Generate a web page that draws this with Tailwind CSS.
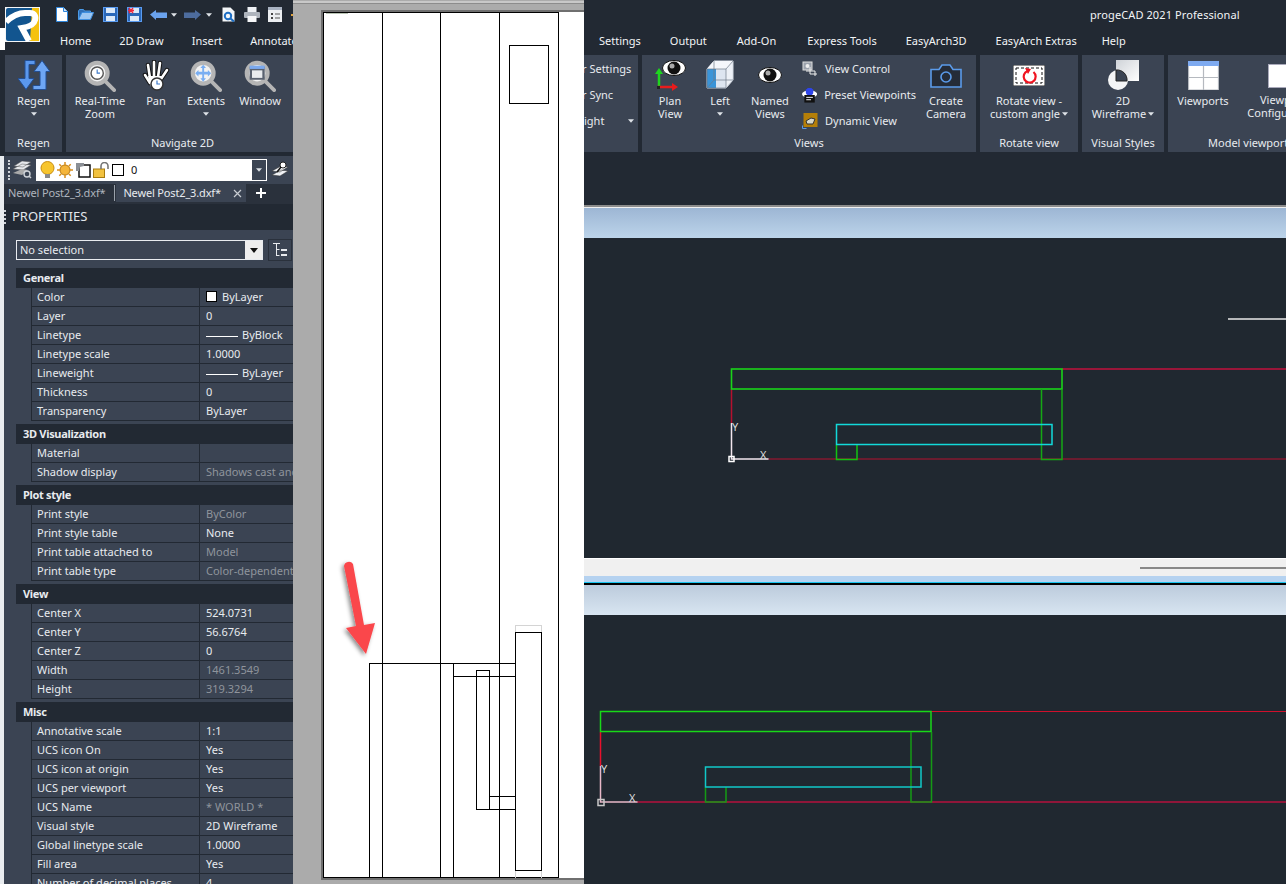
<!DOCTYPE html>
<html lang="en">

<head>
    <meta charset="UTF-8">
    <title>progeCAD 2021 Professional</title>
    <script src="https://cdn.jsdelivr.net/npm/@tailwindcss/browser@4"></script>
</head>

<body class="bg-[#222933] font-['Noto_Sans',sans-serif] text-[11px] text-[#e8ebef] w-[1286px] h-[884px] overflow-hidden">
    <!-- shared icons -->
    <svg class="hidden">
        <symbol id="caret" viewBox="0 0 7 4"><path d="M0 0h7L3.500 4z" fill="#dfe3e8" /></symbol>
        <symbol id="eye" viewBox="0 0 24 16">
            <ellipse cx="12" cy="8" rx="11.500" ry="7.500" fill="#fff" stroke="#111" />
            <circle cx="12" cy="8" r="6.500" fill="#111" />
            <circle cx="10" cy="6" r="2.500" fill="#aaa" />
        </symbol>
        <symbol id="lens" viewBox="0 0 34 34">
            <path d="M22 22l10 10" stroke="#b5b5b5" stroke-width="4" stroke-linecap="round" />
            <circle cx="14" cy="14" r="11" fill="#f2f2f2" stroke="#b5b5b5" stroke-width="4.500" />
        </symbol>
    </svg>

    <div class="flex h-[884px]">
        <!-- left: ribbon and properties -->
        <div class="relative w-[293px] shrink-0 overflow-hidden flex flex-col">
            <div class="absolute left-0 top-[28px] w-[5px] h-[22px] bg-white"></div>
            <div class="flex h-[55px] shrink-0">
                <svg class="ml-[5px] mt-[7px] w-[35px] h-[35px] shrink-0" viewBox="0 0 35 35">
                    <rect width="35" height="35" fill="#f4f6f8" />
                    <rect x="1" y="1" width="33" height="33" rx="2" fill="#12558f" />
                    <path d="M27 1h7v33h-9z" fill="#f5c20e" />
                    <path d="M1 15C8 8 14 6 20 6h5c5 0 6 4 5 7-1 5-6 7-13 8l7 13" fill="none" stroke="#fff" stroke-width="6" />
                </svg>
                <div class="flex flex-col">
                    <div class="h-[28px] flex items-start pt-[7px]">
                        <svg class="ml-[16px] w-[12px] h-[15px]" viewBox="0 0 12 15"><path d="M.5.500h7l4 4v10H.500z" fill="#fff" stroke="#2f86dc" /><path d="M7.500.500v4h4" fill="#cfe3f7" stroke="#2f86dc" /></svg>
                        <svg class="ml-[10px] mt-[2px] w-[16px] h-[11px]" viewBox="0 0 16 11"><path d="M.5 10.500V2l1-1.500h4l1 1.500h6v1" fill="#2f6fb8" stroke="#4a9be8" /><path d="M.5 10.500L4 3.500h11.500l-3 7z" fill="#9cc6f2" stroke="#3f8fe0" /></svg>
                        <svg class="ml-[9px] w-[15px] h-[15px]" viewBox="0 0 15 15"><rect x=".5" y=".5" width="14" height="14" fill="#2a67b8" stroke="#5a9bf0" /><rect x="3" y="1" width="9" height="5" fill="#dbe8f7" /><rect x="3" y="9" width="9" height="5" fill="#dbe8f7" /></svg>
                        <svg class="ml-[9px] w-[15px] h-[15px]" viewBox="0 0 15 15"><rect x=".5" y=".5" width="14" height="14" fill="#2a67b8" stroke="#5a9bf0" /><rect x="3" y="1" width="9" height="5" fill="#dbe8f7" /><rect x="3" y="9" width="9" height="5" fill="#dbe8f7" /><path d="M1 3.500h6M2 .8l4 5.400M6 .8L2 6.200" stroke="#f0263a" stroke-width="1.400" /></svg>
                        <svg class="ml-[8px] mt-[3px] w-[17px] h-[10px]" viewBox="0 0 17 10"><path d="M0 4.500L6 0v2.500h11v5.500H6V10z" fill="#6aa2ee" /></svg>
                        <svg class="ml-[4px] mt-[6px] w-[6px] h-[4px]"><use href="#caret" /></svg>
                        <svg class="ml-[7px] mt-[3px] w-[17px] h-[10px]" viewBox="0 0 17 10"><path d="M17 4.500L11 0v2.500H0v5.500h11V10z" fill="#4d6c9e" /></svg>
                        <svg class="ml-[5px] mt-[6px] w-[6px] h-[4px]"><use href="#caret" /></svg>
                        <svg class="ml-[10px] w-[14px] h-[15px]" viewBox="0 0 14 15"><path d="M.5.500h8l4 4v10H.500z" fill="#f4f6f8" /><circle cx="6" cy="9" r="3.200" fill="none" stroke="#1f6fc4" stroke-width="2" /><path d="M8.500 11.500l3.500 3" stroke="#1f6fc4" stroke-width="2.200" /></svg>
                        <svg class="ml-[8px] w-[16px] h-[15px]" viewBox="0 0 16 15"><rect x="3.500" y="0" width="9" height="5" fill="#eef1f5" /><rect x="0" y="5" width="16" height="6" rx="1" fill="#aeb4bd" /><rect x="3.500" y="9" width="9" height="6" fill="#f6f7f9" /></svg>
                        <svg class="ml-[8px] w-[14px] h-[15px]" viewBox="0 0 14 15"><rect width="14" height="15" fill="#eceef1" /><rect width="14" height="3" fill="#a9b3c2" /><path d="M3 6h2v2H3zM3 10h2v2H3z" fill="#444" /><path d="M7 7h5M7 11h5" stroke="#555" /></svg>
                        <span class="ml-[9px] mt-[7px] w-[2px] h-[2px] bg-[#e0a33c]"></span>
                    </div>
                    <div class="h-[27px] flex items-start gap-[28px] pl-[20px] text-[#f2f4f6] whitespace-nowrap leading-[26px]">
                        <span>Home</span><span>2D Draw</span><span>Insert</span><span>Annotate</span>
                    </div>
                </div>
            </div>

            <div class="flex gap-[4px] pl-[5px] h-[97px] shrink-0">
                <div class="w-[57px] bg-[#3b4453] flex flex-col">
                    <div class="flex-1 flex flex-col items-center pt-[5px] leading-[13px] text-center">
                        <svg class="w-[32px] h-[30px] mb-[4px]" viewBox="0 0 32 30">
                            <path d="M7 .5h10v4h-6v14h5l-8 11-8-11h7z" fill="#5b98ee" stroke="#234f94" />
                            <path d="M24 .5l8 11h-4v18H15v-4h7v-14h-6z" fill="#6ea6f4" stroke="#234f94" />
                        </svg>
                        <span>Regen</span>
                        <svg class="w-[6px] h-[4px] mt-[5px]"><use href="#caret" /></svg>
                    </div>
                    <div class="h-[18px] text-center leading-[18px]">Regen</div>
                </div>
                <div class="flex-1 bg-[#3b4453] flex flex-col">
                    <div class="flex-1 flex pl-[4px] pt-[5px] leading-[13px] text-center">
                        <div class="w-[60px] flex flex-col items-center">
                            <svg class="w-[32px] h-[32px] mb-[2px]" viewBox="0 0 34 34">
                                <use href="#lens" />
                                <circle cx="14" cy="14" r="6.500" fill="#fff" stroke="#555" stroke-width="1.500" />
                                <path d="M14 10v4h3" fill="none" stroke="#3c78c8" stroke-width="1.200" />
                            </svg>
                            <span>Real-Time<br>Zoom</span>
                        </div>
                        <div class="w-[52px] flex flex-col items-center">
                            <svg class="w-[30px] h-[32px] mb-[2px]" viewBox="0 0 30 32">
                                <path d="M4 15l5 8M9 18L7 5M13 17V2M17 17l2-14M20 19l6-9" stroke="#111" stroke-width="4.500" stroke-linecap="round" />
                                <path d="M4 15l5 8M9 18L7 5M13 17V2M17 17l2-14M20 19l6-9" stroke="#fff" stroke-width="2.600" stroke-linecap="round" />
                                <path d="M7 16h14l-2 11H10z" fill="#fff" />
                                <circle cx="16" cy="24" r="6" fill="#fff" stroke="#333" stroke-width="1.500" />
                                <path d="M16 20.500V24h3" fill="none" stroke="#3c78c8" stroke-width="1.200" />
                            </svg>
                            <span>Pan</span>
                        </div>
                        <div class="w-[48px] flex flex-col items-center">
                            <svg class="w-[32px] h-[32px] mb-[2px]" viewBox="0 0 34 34">
                                <use href="#lens" />
                                <path d="M14 5l3 3.500h-2v4h4v-2l3.500 3.500-3.500 3.500v-2h-4v4h2L14 23l-3-3.500h2v-4H9v2L5.500 14 9 10.500v2h4v-4h-2z" fill="#79aef2" />
                            </svg>
                            <span>Extents</span>
                            <svg class="w-[6px] h-[4px] mt-[5px]"><use href="#caret" /></svg>
                        </div>
                        <div class="w-[60px] flex flex-col items-center">
                            <svg class="w-[32px] h-[32px] mb-[2px]" viewBox="0 0 34 34">
                                <use href="#lens" />
                                <rect x="6" y="7" width="16" height="14" fill="#5a6270" />
                                <rect x="8.500" y="11" width="11" height="8" fill="#e9ebee" />
                                <rect x="6" y="6" width="16" height="3.500" fill="#7ba9ee" />
                            </svg>
                            <span>Window</span>
                        </div>
                    </div>
                    <div class="h-[18px] text-center leading-[18px] pl-[6px]">Navigate 2D</div>
                </div>
            </div>

            <div class="h-[4px] shrink-0"></div>

            <div class="flex-1 border-l-[4px] border-[#e9ecef] flex flex-col min-h-0">
                <div class="h-[28px] shrink-0 bg-[#3b4453] pl-[1px] flex items-center">
                    <span class="ml-[3px] w-[2px] h-[20px] border-l-2 border-dotted border-[#cfd3d8]"></span>
                    <svg class="ml-[3px] w-[19px] h-[18px]" viewBox="0 0 19 18"><path d="M0 8l9-5 9 1-8 5zM1 5l8-5 9 1-8 5z" fill="#e6e8ec" stroke="#555" stroke-width=".5" /><path d="M0 12l9-4 6 1-6 5z" fill="#aaa" /><circle cx="14" cy="13" r="3" fill="none" stroke="#cfd3d8" stroke-width="1.400" /><path d="M16 15l2 2" stroke="#cfd3d8" stroke-width="1.500" /></svg>
                    <div class="ml-[4px] w-[231px] h-[22px] bg-white flex items-center relative">
                        <svg class="ml-[4px] w-[15px] h-[18px]" viewBox="0 0 15 18"><circle cx="7.500" cy="7" r="6.500" fill="#f7c52e" stroke="#c98d10" /><rect x="5" y="13" width="5" height="4" fill="#8a8a8a" /></svg>
                        <svg class="ml-[2px] w-[16px] h-[16px]" viewBox="0 0 16 16"><circle cx="8" cy="8" r="5" fill="#f5b53a" stroke="#b97a10" /><path d="M8 0v3M8 13v3M0 8h3M13 8h3M2.300 2.300l2 2M11.700 11.700l2 2M2.300 13.700l2-2M11.700 4.300l2-2" stroke="#d98f1c" stroke-width="1.500" /></svg>
                        <svg class="ml-[2px] w-[16px] h-[16px]" viewBox="0 0 16 16"><rect x="4" y="3" width="11" height="12" fill="#fff" stroke="#111" stroke-width="1.500" /><path d="M1 1h8v3l-4 1-1 4H1z" fill="#8b8f95" /></svg>
                        <svg class="ml-[2px] w-[17px] h-[16px]" viewBox="0 0 17 16"><rect x="0.500" y="7" width="11" height="8.500" fill="#f2c240" stroke="#a87c10" /><path d="M8 7V4a3.500 3.500 0 0 1 7 0v3" fill="none" stroke="#777" stroke-width="1.600" /></svg>
                        <span class="ml-[2px] w-[12px] h-[12px] bg-white border border-black"></span>
                        <span class="ml-[7px] text-[#111]">0</span>
                        <span class="absolute right-0 top-0 w-[16px] h-[22px] bg-[#3b4453] border border-white flex items-center justify-center">
                            <svg class="w-[6px] h-[4px]"><use href="#caret" /></svg>
                        </span>
                    </div>
                    <svg class="ml-[5px] w-[17px] h-[18px]" viewBox="0 0 17 18"><path d="M0 10l9-5 7 1-8 5zM0 14l9-5 7 1-8 5z" fill="#f0f2f5" stroke="#333" stroke-width=".5" /><circle cx="11" cy="4" r="3" fill="#fff" stroke="#222" /><path d="M9 6l-4 5" stroke="#111" stroke-width="1.500" /></svg>
                </div>
                <div class="h-[20px] shrink-0 bg-[#2a313c] flex items-start whitespace-nowrap tracking-[-0.16px]">
                    <span class="ml-[4px] leading-[18px] text-[#aeb4bd]">Newel Post2_3.dxf*</span>
                    <span class="ml-[9px] mt-[1px] w-px h-[16px] bg-[#9aa1ab]"></span>
                    <div class="ml-[1px] w-[130px] h-[18px] bg-[#3b4453] flex items-center pl-[7px]">
                        <span>Newel Post2_3.dxf*</span>
                        <svg class="ml-[12px] w-[9px] h-[9px]" viewBox="0 0 9 9"><path d="M1 1l7 7M8 1L1 8" stroke="#c8ccd2" stroke-width="1.200" /></svg>
                    </div>
                    <svg class="ml-[10px] mt-[4px] w-[10px] h-[10px]" viewBox="0 0 10 10"><path d="M5 0v10M0 5h10" stroke="#fff" stroke-width="2" /></svg>
                </div>
                <div class="h-[26px] shrink-0 bg-[#222933] flex items-center pb-[1px] text-[13px] text-[#e3e7ec]">
                    <span class="w-[2px] h-[14px] border-l-2 border-dotted border-[#cfd3d8]"></span>
                    <span class="ml-[6px]">PROPERTIES</span>
                </div>
                <div class="flex-1 bg-[#3b4453] pl-[12px] pt-[10px] min-h-0">
                    <div class="flex items-center h-[20px]">
                        <div class="w-[247px] h-[20px] border border-[#e8ebef] flex items-center pl-[3px] justify-between shrink-0">
                            <span>No selection</span>
                            <span class="w-[17px] h-[18px] bg-[#eeeeee] flex items-center justify-center">
                                <svg class="w-[8px] h-[5px]" viewBox="0 0 8 5"><path d="M0 0h8L4 5z" fill="#111" /></svg>
                            </span>
                        </div>
                        <span class="ml-[5px] w-[24px] h-[22px] border border-[#2a313c] flex items-center justify-center shrink-0">
                            <svg class="w-[14px] h-[14px]" viewBox="0 0 14 14"><path d="M0 .5h7M3.500 1v12M3.500 6.500h3M3.500 12.500h3" stroke="#e8ebef" /><path d="M8 6h6v2H8zM8 11h6v2H8z" fill="#e8ebef" /></svg>
                        </span>
                    </div>
                    <div id="props" class="mt-[8px]"></div>
                </div>
            </div>
        </div>

        <!-- middle: the sheet -->
        <svg class="w-[291px] h-[884px] shrink-0" viewBox="293 0 291 884" shape-rendering="crispEdges">
            <defs>
                <filter id="shadow" x="-40%" y="-20%" width="180%" height="140%">
                    <feDropShadow dx="-2" dy="2" stdDeviation="2" flood-color="#000" flood-opacity="0.45" />
                </filter>
            </defs>
            <rect x="293" y="0" width="291" height="884" fill="#ababab" />
            <rect x="293" y="1" width="291" height="2" fill="#c8c8c8" />
            <rect x="293" y="3" width="291" height="1" fill="#8c8c8c" />
            <rect x="321" y="10" width="263" height="870" fill="#6f6f6f" />
            <rect x="323" y="12" width="261" height="866" fill="#fff" />
            <path d="M326 13.500h22" stroke="#b9c4b4" />
            <g fill="none" stroke="#000">
                <path d="M323.500 878V12.500H558.500V878M323.500 877.500H558.500" />
                <path d="M382.500 12v866M440.500 12v866M499.500 12v866" />
                <rect x="509.500" y="45.500" width="39" height="58" />
                <path d="M369.500 878V663.500H515.500M453.500 663v215M453.500 676.500h62" />
                <rect x="476.500" y="670.500" width="13" height="139" />
                <path d="M489 796.500h26M489 809.500h26" />
                <path d="M515.500 632.500v-7h26v7M515.500 870.500v7M541.500 870.500v7" stroke="#d4d4d4" />
                <rect x="515.500" y="632.500" width="26" height="238" />
            </g>
            <g filter="url(#shadow)" shape-rendering="auto" fill="#fa474c">
                <path d="M344 566a5 5 0 0 1 9-2l11 61 11-2-9 31-20-26 10-2z" />
            </g>
        </svg>

        <!-- right: ribbon and the two viewports -->
        <div class="flex-1 min-w-0 overflow-hidden flex flex-col">
            <div class="h-[29px] shrink-0 pl-[506px] pt-[6px] tracking-[0.1px] leading-[18px] text-[#f2f4f6] whitespace-nowrap">progeCAD 2021 Professional</div>
            <div class="h-[26px] shrink-0 flex gap-[29px] pl-[15px] text-[#f2f4f6] whitespace-nowrap leading-[24px]">
                <span>Settings</span><span>Output</span><span class="ml-[1px]">Add-On</span><span class="ml-[2px]">Express Tools</span><span>EasyArch3D</span><span>EasyArch Extras</span><span class="-ml-[4px]">Help</span>
            </div>
            <div class="h-[97px] shrink-0 flex gap-[4px] whitespace-nowrap">
                <div class="w-[54px] shrink-0 bg-[#3b4453] overflow-hidden leading-[26px] pt-[1px] relative">
                    <div class="-ml-[2px]">r Settings</div>
                    <div class="-ml-[2px]">r Sync</div>
                    <div class="flex items-center">ight<svg class="ml-[24px] w-[6px] h-[4px]"><use href="#caret" /></svg></div>
                </div>
                <div class="w-[334px] shrink-0 bg-[#3b4453] flex flex-col">
                    <div class="flex-1 flex leading-[13px] text-center pt-[5px]">
                        <div class="w-[56px] flex flex-col items-center">
                            <svg class="w-[32px] h-[34px]" viewBox="0 0 32 34">
                                <use href="#eye" x="8" y="0" width="24" height="16" />
                                <path d="M5 27V12" stroke="#1ed51e" stroke-width="2.500" /><path d="M5 8l4 6H1z" fill="#1ed51e" />
                                <path d="M4 27h15" stroke="#e81c1c" stroke-width="2.500" /><path d="M24 27l-6-4v8z" fill="#e81c1c" />
                                <rect x="3" y="26" width="3" height="3" fill="#222" />
                            </svg>
                            <span>Plan<br>View</span>
                        </div>
                        <div class="w-[44px] flex flex-col items-center">
                            <svg class="w-[28px] h-[34px]" viewBox="0 0 28 34">
                                <path d="M1 9l7-8h19v19l-7 8H1z" fill="#edf1f7" stroke="#d5dbe4" />
                                <path d="M1 9l7-8h19l-7 8z" fill="#f5f7fb" />
                                <path d="M1 9h9v19H1z" fill="#3a94d8" />
                                <path d="M10 9h10v19H10z" fill="#dde5f0" />
                                <path d="M1 9h19v19H1zM20 9l7-8M8 1v19h19M8 20l-7 8" fill="none" stroke="#6f7a88" stroke-width=".7" />
                            </svg>
                            <span>Left</span>
                            <svg class="w-[6px] h-[4px] mt-[5px]"><use href="#caret" /></svg>
                        </div>
                        <div class="w-[56px] flex flex-col items-center">
                            <svg class="mt-[7px] mb-[11px] w-[24px] h-[16px] shrink-0"><use href="#eye" /></svg>
                            <span>Named<br>Views</span>
                        </div>
                        <div class="w-[114px] ml-[4px] flex flex-col text-left leading-[26px] -mt-[5px] pt-[1px]">
                            <div class="flex items-center">
                                <svg class="w-[16px] h-[16px] mr-[7px]" viewBox="0 0 16 16"><rect x="1" y="1" width="9" height="8" fill="#9ba2ac" stroke="#ddd" /><circle cx="5.500" cy="5" r="2" fill="#eee" /><path d="M8 6v7h7M4 10h9v5" fill="none" stroke="#eee" /></svg>View Control
                            </div>
                            <div class="flex items-center">
                                <svg class="w-[16px] h-[16px] mr-[7px]" viewBox="0 0 16 16"><circle cx="8" cy="5" r="4.500" fill="#2f45ea" /><ellipse cx="8" cy="7" rx="8" ry="4" fill="#fff" /><circle cx="8" cy="4.500" r="4" fill="#2f45ea" /><rect x="2.500" y="8" width="11" height="8" fill="#111" /><path d="M4.500 10.500h7M4.500 13h5" stroke="#fff" /></svg>Preset Viewpoints
                            </div>
                            <div class="flex items-center">
                                <svg class="w-[16px] h-[16px] mr-[7px]" viewBox="0 0 16 16"><rect x="1.500" y="0" width="14" height="14" fill="#b57f08" /><path d="M4 8l5-3 4 1-2 5-6 0z" fill="#d8d8c8" stroke="#333" /><path d="M.5 15.500v-3M.5 15.500h4" stroke="#5b9bea" /></svg>Dynamic View
                            </div>
                        </div>
                        <div class="w-[60px] flex flex-col items-center">
                            <svg class="mt-[4px] w-[32px] h-[24px] mb-[6px]" viewBox="0 0 32 24"><path d="M1 5.500h8l3-4.500h8l3 4.500h8V23H1z" fill="#252c38" stroke="#5b9bea" stroke-width="1.600" /><circle cx="16" cy="13" r="5" fill="none" stroke="#5b9bea" stroke-width="1.600" /></svg>
                            <span>Create<br>Camera</span>
                        </div>
                    </div>
                    <div class="h-[18px] text-center leading-[18px]">Views</div>
                </div>
                <div class="w-[98px] shrink-0 bg-[#3b4453] flex flex-col">
                    <div class="flex-1 flex flex-col items-center pt-[5px] leading-[13px] text-center">
                        <svg class="mt-[5px] mb-[8px] w-[32px] h-[21px]" viewBox="0 0 32 21"><rect width="32" height="21" fill="#fff" stroke="#222" /><rect x="3" y="3" width="26" height="15" fill="none" stroke="#111" stroke-dasharray="3 2" /><path d="M20.500 7a6 6 0 1 1-6-1" fill="none" stroke="#f01420" stroke-width="2.200" /><path d="M12 3l6 1-3 5z" fill="#f01420" /></svg>
                        <span>Rotate view -</span>
                        <span class="flex items-center">custom angle<svg class="ml-[2px] w-[6px] h-[4px]"><use href="#caret" /></svg></span>
                    </div>
                    <div class="h-[18px] text-center leading-[18px]">Rotate view</div>
                </div>
                <div class="w-[82px] shrink-0 bg-[#3b4453] flex flex-col">
                    <div class="flex-1 flex flex-col items-center pt-[5px] leading-[13px] text-center">
                        <svg class="mb-[3px] w-[32px] h-[31px]" viewBox="0 0 32 31"><defs><linearGradient id="sq" x1="0" y1="0" x2="1" y2="1"><stop offset="0" stop-color="#cfd3d8" /><stop offset="1" stop-color="#fff" /></linearGradient></defs><circle cx="11" cy="20" r="10" fill="#f4f5f6" /><rect x="9" y="0" width="23" height="21" fill="url(#sq)" /><path d="M9 10a10 10 0 0 1 11 11H9z" fill="#3b4453" stroke="#222" /></svg>
                        <span>2D</span>
                        <span class="flex items-center">Wireframe<svg class="ml-[2px] w-[6px] h-[4px]"><use href="#caret" /></svg></span>
                    </div>
                    <div class="h-[18px] text-center leading-[18px]">Visual Styles</div>
                </div>
                <div class="flex-1 bg-[#3b4453] flex flex-col overflow-hidden">
                    <div class="flex-1 flex pt-[6px] leading-[13px] text-center">
                        <div class="w-[70px] shrink-0 flex flex-col items-center">
                            <svg class="mb-[4px] w-[31px] h-[29px] shrink-0" viewBox="0 0 31 29"><rect width="31" height="29" fill="#fff" /><rect width="31" height="5" fill="#7eaaf0" /><path d="M.5 5v24h30V5M15.500 5v24M0 16.500h31" fill="none" stroke="#b5b9bf" stroke-width="1.200" /></svg>
                            <span>Viewports</span>
                        </div>
                        <div class="flex flex-col items-center w-[90px] shrink-0">
                            <span class="mt-[3px] mb-[4px] w-[31px] h-[24px] bg-white border border-[#aab] shrink-0"></span>
                            <span class="mt-[1px]">Viewport<br>Configuration</span>
                        </div>
                    </div>
                    <div class="h-[18px] leading-[18px] pl-[40px]">Model viewports</div>
                </div>
            </div>
            <div class="h-[53px] shrink-0"></div>

            <div class="h-[2px] shrink-0 bg-[#8c8c8c]"></div>
            <div class="h-px shrink-0 bg-[#f0f0f0]"></div>
            <div class="h-[30px] shrink-0 bg-linear-to-b from-[#9db6d4] to-[#bcd4ea]"></div>
            <svg class="w-[702px] h-[320px] shrink-0 bg-[#202830]" viewBox="584 238 702 320" fill="none" stroke-width="1.500">
                <path d="M1228 319h58" stroke="#e8e8e8" />
                <path d="M1062 369h224" stroke="#c2103c" />
                <path d="M768 459h518" stroke="#b5102f" stroke-width="1" />
                <path d="M731.500 389v34" stroke="#b5102f" />
                <path d="M731.500 423v36h37" stroke="#f2e6ee" />
                <rect x="729" y="456.500" width="5" height="5" stroke="#fff" />
                <rect x="731.500" y="369" width="330.500" height="20" stroke="#1ad41a" stroke-width="1.600" />
                <path d="M1041.500 389v70.500h20.500V389" stroke="#14a814" />
                <path d="M836.500 445v14.500H857V445" stroke="#12c212" />
                <rect x="836.500" y="424.500" width="215.500" height="20" stroke="#12dada" />
                <text x="732" y="431" font-size="11" fill="#dcdcdc" stroke="none">Y</text>
                <text x="760" y="459" font-size="11" fill="#dcdcdc" stroke="none">X</text>
            </svg>
            <div class="h-[18px] shrink-0 bg-[#f0f0f0] border-t border-white flex items-center justify-end">
                <span class="w-[146px] h-[2px] bg-[#888888]"></span>
            </div>
            <div class="h-[6px] shrink-0 bg-[#b5d2f0]"></div>
            <div class="h-px shrink-0 bg-[#19c4ee]"></div>
            <div class="h-[2px] shrink-0 bg-black"></div>
            <div class="h-[30px] shrink-0 bg-linear-to-b from-[#bccbdc] to-[#d8e5f1]"></div>
            <svg class="w-[702px] h-[269px] shrink-0 bg-[#202830]" viewBox="584 615 702 269" fill="none" stroke-width="1.500">
                <path d="M931 711.500h355" stroke="#d0102c" stroke-width="1" />
                <path d="M637 802h649" stroke="#b5103c" />
                <path d="M600.500 732v34" stroke="#e8102c" />
                <path d="M600.500 766v36h37" stroke="#e8b8c8" />
                <rect x="598" y="799.500" width="6" height="6" stroke="#c8c8c8" />
                <rect x="600.500" y="711.500" width="330.500" height="20" stroke="#18d818" />
                <path d="M911 732v70h20.500v-70" stroke="#149a14" />
                <path d="M705.500 787.500V802H726v-15" stroke="#149a14" />
                <rect x="705.500" y="767" width="215.500" height="20" stroke="#10c8c8" />
                <text x="601" y="773" font-size="11" fill="#dcdcdc" stroke="none">Y</text>
                <text x="629" y="802" font-size="11" fill="#dcdcdc" stroke="none">X</text>
            </svg>
        </div>
    </div>

    <script>
        const propsEl = document.getElementById('props');
        const line = '<span class="inline-block align-middle w-[32px] h-px bg-white mr-[4px]"></span>';
        const swatch = '<span class="inline-block align-[-1px] w-[11px] h-[11px] bg-white border border-black mr-[5px]"></span>';
        // label, value, greyed out
        const sections = [
            ['General', [['Color', swatch + 'ByLayer'], ['Layer', '0'], ['Linetype', line + 'ByBlock'], ['Linetype scale', '1.0000'], ['Lineweight', line + 'ByLayer'], ['Thickness', '0'], ['Transparency', 'ByLayer']]],
            ['3D Visualization', [['Material', ''], ['Shadow display', 'Shadows cast and received', true]]],
            ['Plot style', [['Print style', 'ByColor', true], ['Print style table', 'None'], ['Print table attached to', 'Model', true], ['Print table type', 'Color-dependent', true]]],
            ['View', [['Center X', '524.0731'], ['Center Y', '56.6764'], ['Center Z', '0'], ['Width', '1461.3549', true], ['Height', '319.3294', true]]],
            ['Misc', [['Annotative scale', '1:1'], ['UCS icon On', 'Yes'], ['UCS icon at origin', 'Yes'], ['UCS per viewport', 'Yes'], ['UCS Name', '* WORLD *', true], ['Visual style', '2D Wireframe'], ['Global linetype scale', '1.0000'], ['Fill area', 'Yes'], ['Number of decimal places', '4']]],
        ];

        propsEl.innerHTML = sections.map(([title, rows]) => `
            <div class="h-[20px] bg-[#222933] pl-[7px] font-bold tracking-[-0.3px] leading-[20px]">${title}</div>
            <div class="mb-[3px]">${rows.map(([label, value, grey]) => `
                <div class="ml-[15px] h-[19px] flex border-l border-b border-[#222933] leading-[18px] whitespace-nowrap overflow-hidden">
                    <span class="w-[168px] shrink-0 pl-[5px] border-r border-[#222933]">${label}</span>
                    <span class="pl-[6px] ${grey ? 'text-[#8f949c]' : ''}">${value}</span>
                </div>`).join('')}</div>`).join('');
    </script>
</body>

</html>
